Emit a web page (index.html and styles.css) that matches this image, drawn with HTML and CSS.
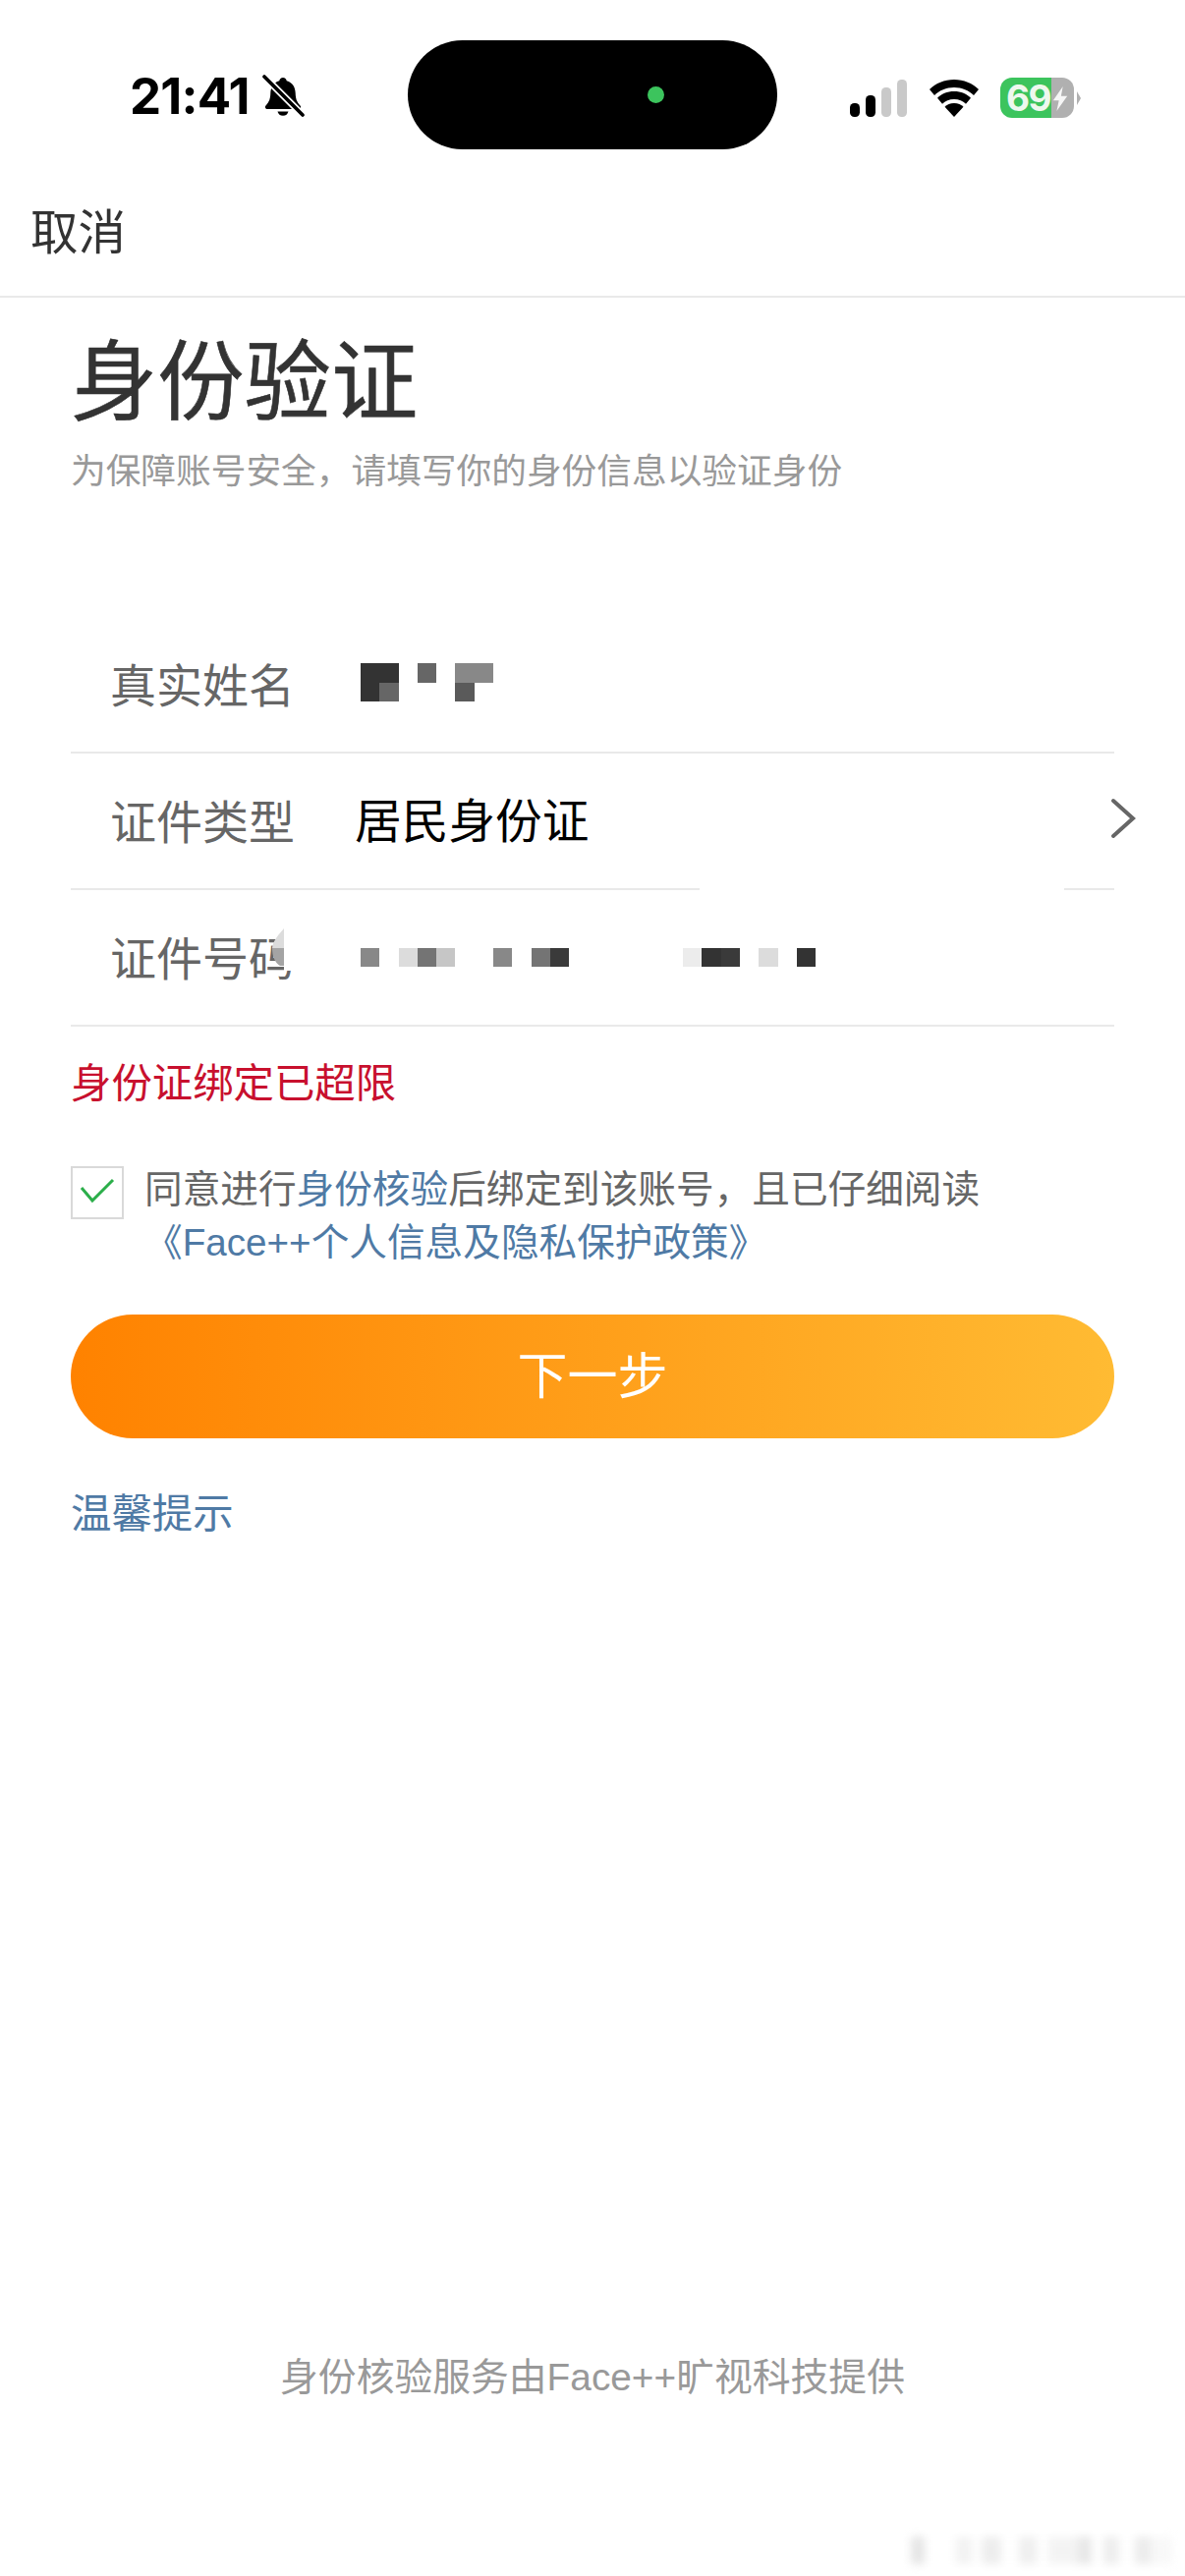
FILE: index.html
```html
<!DOCTYPE html>
<html lang="zh-CN">
<head>
<meta charset="utf-8">
<title>身份验证</title>
<link rel="stylesheet" href="styles.css">
</head>
<body>
<div class="page">
  <header class="status">
    <div class="status-left">
      <span class="time">21:41</span>
      <svg class="bell" viewBox="0 0 44 44" width="44" height="44">
        <path d="M22 3c-2 0-3.500 1.500-3.700 3.200C12 8 9.500 13 9.300 19c-.2 5-1 8.500-4.800 12.500-1.300 1.500-.4 3.500 1.800 3.500h31.400c2.200 0 3.100-2 1.800-3.500-3.800-4-4.600-7.500-4.800-12.500-.2-6-2.700-11-9-12.800C25.500 4.500 24 3 22 3z" fill="#000"/>
        <path d="M16.500 37.500a5.700 5.700 0 0 0 11 0z" fill="#000"/>
        <path d="M2 1l39 39" stroke="#fff" stroke-width="7"/>
        <path d="M3 2l39 39" stroke="#000" stroke-width="3.600" stroke-linecap="round"/>
      </svg>
    </div>
    <div class="island"><span class="island-dot"></span></div>
    <div class="status-right">
      <svg class="signal" viewBox="0 0 60 38" width="60" height="38">
        <rect x="0" y="24" width="10" height="14" rx="4.500" fill="#000"/>
        <rect x="16" y="16" width="10" height="22" rx="4.500" fill="#000"/>
        <rect x="32" y="8" width="10" height="30" rx="4.500" fill="#c9c9c9"/>
        <rect x="48" y="0" width="10" height="38" rx="4.500" fill="#c9c9c9"/>
      </svg>
      <svg class="wifi" viewBox="0 0 52 38" width="52" height="38">
        <path d="M26 0C16 0 7.500 3.800 1 10l5 6c5-5 12-8 20-8s15 3 20 8l5-6C44.500 3.800 36 0 26 0z" fill="#000"/>
        <path d="M26 12c-7 0-13 2.700-17 6.700l5 6c3-3 7.200-4.700 12-4.700s9 1.700 12 4.700l5-6c-4-4-10-6.700-17-6.700z" fill="#000"/>
        <path d="M26 24c-4 0-7.300 1.400-9.500 3.700L26 38l9.500-10.300C33.300 25.400 30 24 26 24z" fill="#000"/>
      </svg>
      <div class="battery">
        <div class="battery-body">
          <span class="battery-num">69</span>
          <svg class="bolt" viewBox="0 0 20 30" width="18" height="27">
            <path d="M13 1L2 17h6.500L6 29l12-17h-7z" fill="#fff" fill-opacity=".88"/>
          </svg>
        </div>
        <span class="battery-cap"></span>
      </div>
    </div>
  </header>

  <nav class="nav"><span class="cancel">取消</span></nav>

  <main class="content">
    <h1 class="title">身份验证</h1>
    <p class="subtitle">为保障账号安全，请填写你的身份信息以验证身份</p>

    <section class="form">
      <div class="row">
        <span class="label">真实姓名</span>
        <div class="mosaic mosaic-name">
          <i class="c3"></i><i class="c3"></i><i></i><i class="c6"></i><i></i><i class="c8"></i><i class="c8"></i>
          <i class="c3"></i><i class="c6"></i><i></i><i></i><i></i><i class="c5"></i>
        </div>
      </div>
      <div class="row">
        <span class="label">证件类型</span>
        <span class="value">居民身份证</span>
        <svg class="chevron" viewBox="0 0 26 42" width="26" height="42">
          <path d="M3 3l20 18L3 39" fill="none" stroke="#666" stroke-width="4" stroke-linecap="round" stroke-linejoin="miter"/>
        </svg>
        <span class="line-gap"></span>
      </div>
      <div class="row">
        <span class="label">证件号码</span>
        <svg class="smear" viewBox="0 0 30 50" width="30" height="50">
          <rect x="13" y="0" width="17" height="46" fill="#fff"/>
          <path d="M13 3C8 9 2 15 1 23h12z" fill="#dcdcdc"/>
          <path d="M1 23c0 9 3 15 8 18l4 0V23z" fill="#a4a4a4"/>
        </svg>
        <div class="mosaic mosaic-id">
          <i class="c8"></i><i></i><i class="cd"></i><i class="c7"></i><i class="cc"></i><i></i><i></i><i class="c8"></i><i></i><i class="c7"></i><i class="c3a"></i>
          <i></i><i></i><i></i><i></i><i></i><i></i>
          <i class="ce"></i><i class="c3"></i><i class="c3a"></i><i></i><i class="cd"></i><i></i><i class="c3"></i>
        </div>
      </div>
    </section>

    <p class="error">身份证绑定已超限</p>

    <div class="agree">
      <span class="checkbox">
        <svg viewBox="0 0 50 50" width="50" height="50">
          <path d="M9 20l11 13L41 12" fill="none" stroke="#2bae4a" stroke-width="3"/>
        </svg>
      </span>
      <div class="agree-text">
        <p class="agree-line">同意进行<a class="link">身份核验</a>后绑定到该账号，且已仔细阅读</p>
        <p class="agree-line policy"><a class="link">《Face++个人信息及隐私保护政策》</a></p>
      </div>
    </div>

    <button class="next">下一步</button>

    <a class="tips">温馨提示</a>
  </main>

  <footer class="footer">身份核验服务由Face++旷视科技提供</footer>
  <div class="watermark"></div>
</div>
</body>
</html>
```
FILE: styles.css
```css
* { box-sizing: border-box; }
html, body { margin: 0; padding: 0; background: #fff; }
body { font-family: "Liberation Sans", "Noto Sans CJK SC", sans-serif; }
.page {
  position: relative;
  width: 1206px;
  height: 2622px;
  overflow: hidden;
  display: flex;
  flex-direction: column;
  background: #fff;
}
p, h1 { margin: 0; }
.status {
  height: 173px;
  padding-top: 41px;
  display: flex;
  align-items: flex-start;
}
.status-left {
  width: 415px;
  padding: 31px 0 0 132px;
  display: flex;
  align-items: center;
  gap: 12px;
}
.time { font: 700 51px/52px "Inter", "Liberation Sans", sans-serif; letter-spacing: -.8px; color: #000; }
.bell { flex: none; }
.island {
  position: relative;
  width: 376px;
  height: 111px;
  border-radius: 56px;
  background: #000;
}
.island-dot {
  position: absolute;
  left: 244px;
  top: 47px;
  width: 17px;
  height: 17px;
  border-radius: 50%;
  background: #3cc45d;
}
.status-right {
  padding: 38px 0 0 74px;
  display: flex;
  align-items: center;
  gap: 20px;
}
.signal, .wifi { flex: none; }
.battery { display: flex; align-items: center; gap: 3px; margin-left: 1px; }
.battery-body {
  position: relative;
  width: 75px;
  height: 41px;
  border-radius: 12px;
  background: linear-gradient(90deg, #3cc45d 0, #3cc45d 52px, #b0b0b0 52px);
  display: flex;
  align-items: center;
  padding-left: 6px;
}
.battery-num { font: 700 37px/41px "Inter", "Liberation Sans", sans-serif; color: #eef8ee; letter-spacing: -1.5px; }
.bolt { position: absolute; left: 52px; top: 8px; }
.battery-cap {
  width: 0;
  height: 0;
  border-left: 4px solid #b0b0b0;
  border-top: 7px solid transparent;
  border-bottom: 7px solid transparent;
}
.nav {
  height: 130px;
  padding: 0 0 0 31px;
  display: flex;
  align-items: center;
  border-bottom: 2px solid #e9e9e9;
}
.cancel { font-size: 48.5px; line-height: 56px; color: #333; position: relative; top: 0; }
.content { padding: 0 72px; display: flex; flex-direction: column; }
.title { font-size: 88.3px; line-height: 100px; font-weight: 400; color: #333; padding-top: 37px; box-sizing: content-box; -webkit-text-stroke: .6px #333; }
.subtitle { font-size: 35.7px; line-height: 50px; color: #999; margin-top: 15px; }
.form { margin-top: 123px; }
.row {
  position: relative;
  height: 139px;
  display: flex;
  align-items: center;
  border-bottom: 2px solid #e9e9e9;
}
.label { width: 289px; padding: 4px 0 0 40px; font-size: 47px; line-height: 60px; color: #666; flex: none; white-space: nowrap; }
.value { font-size: 47.7px; line-height: 60px; color: #000; padding-top: 2px; margin-left: 0; }
.chevron { position: absolute; right: -22px; top: 45px; }
.line-gap { position: absolute; left: 640px; width: 371px; bottom: -4px; height: 6px; background: #fff; }
.smear { position: absolute; left: 204px; top: 36px; }
.mosaic { display: grid; grid-template-columns: repeat(25, 19.3px); flex: none; margin-left: 6px; }
.mosaic i { display: block; height: 19.5px; }
.mosaic-name { position: relative; top: -2px; grid-template-columns: repeat(7, 19.3px); }
.mosaic-id { grid-auto-rows: 19.5px; }
.c3 { background: #333; }
.c3a { background: #3a3a3a; }
.c5 { background: #5a5a5a; }
.c6 { background: #666; }
.c7 { background: #747474; }
.c8 { background: #888; }
.cc { background: #c6c6c6; }
.cd { background: #dcdcdc; }
.ce { background: #ececec; }
.error { margin-top: 30px; font-size: 41.4px; line-height: 56px; color: #c8102e; }
.agree { margin-top: 53px; display: flex; align-items: flex-start; }
.checkbox {
  flex: none;
  width: 54px;
  height: 54px;
  margin-top: 3px;
  border: 2px solid #d9d9d9;
  display: flex;
  align-items: center;
  justify-content: center;
}
.agree-text { margin-left: 21px; }
.agree-line { font-size: 38.65px; line-height: 54px; color: #666; white-space: nowrap; }
.link { color: #4f7aa5; }
.next {
  margin-top: 46px;
  width: 1062px;
  height: 126px;
  border: 0;
  padding: 2px 0 0;
  border-radius: 63px;
  background: linear-gradient(90deg, #ff8200, #ffbb33);
  color: #fff;
  font: 400 51px/124px "Liberation Sans", "Noto Sans CJK SC", sans-serif;
}
.tips { margin-top: 49px; font-size: 41.4px; line-height: 56px; color: #4f7aa5; }
.footer {
  position: absolute;
  left: 0;
  right: 0;
  top: 2393px;
  text-align: center;
  font-size: 38.8px;
  line-height: 54px;
  color: #999;
}
.watermark {
  position: absolute;
  left: 927px;
  top: 2582px;
  width: 266px;
  height: 28px;
  filter: blur(4px);
  opacity: .75;
  background: linear-gradient(90deg, #ddd 0 14px, #fff 14px 46px, #eee 46px 62px, #fff 62px 72px, #e8e8e8 72px 92px, #fff 92px 110px, #eaeaea 110px 128px, #fff 128px 140px, #f0f0f0 140px 170px, #e0e0e0 170px 184px, #fff 184px 196px, #e8e8e8 196px 212px, #fff 212px 228px, #e6e6e6 228px 244px, #f6f6f6 244px 266px);
}
```
